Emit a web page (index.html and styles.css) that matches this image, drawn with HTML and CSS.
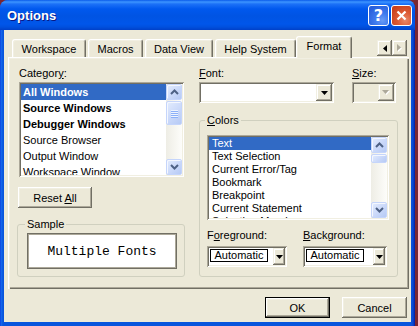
FILE: index.html
```html
<!DOCTYPE html>
<html lang="en">
<head>
    <meta charset="UTF-8">
    <meta name="viewport" content="width=device-width, initial-scale=1.0">
    <title>Options</title>
    <link rel="stylesheet" href="styles.css">
</head>
<body>
    <div class="window">
        <div class="titlebar">
            <span class="title">Options</span>
            <span class="cap-btn help">?</span>
            <span class="cap-btn close">
                <svg width="11" height="11" viewBox="0 0 11 11"><path d="M1.5 1.5 L9.5 9.5 M9.5 1.5 L1.5 9.5" stroke="#fff" stroke-width="2.2" fill="none"/></svg>
            </span>
        </div>

        <div class="client">
            <div class="tabstrip">
                <span class="tab tab-ws">Workspace</span>
                <span class="tab tab-mc">Macros</span>
                <span class="tab tab-dv">Data View</span>
                <span class="tab tab-hs">Help System</span>
                <span class="tab tab-fm active">Format</span>
                <span class="tab-arrows">
                    <span class="btn3d tab-arrow">
                        <svg width="4" height="7" viewBox="0 0 4 7"><polygon points="4,0 4,7 0,3.5" fill="#000"/></svg>
                    </span>
                    <span class="btn3d tab-arrow">
                        <svg width="5" height="8" viewBox="0 0 5 8"><polygon points="1,1 5,4.5 1,8" fill="#fff"/><polygon points="0,0 4,3.5 0,7" fill="#ACA899"/></svg>
                    </span>
                </span>
            </div>

            <div class="page">
                <div class="col-left">
                    <div class="label">Categor<u>y</u>:</div>
                    <div class="listbox cat-list">
                        <div class="items">
                            <div class="item bold selected">All Windows</div>
                            <div class="item bold">Source Windows</div>
                            <div class="item bold">Debugger Windows</div>
                            <div class="item">Source Browser</div>
                            <div class="item">Output Window</div>
                            <div class="item">Workspace Window</div>
                        </div>
                        <div class="vscroll">
                            <span class="sb-btn"><svg width="9" height="6" viewBox="0 0 9 6"><polyline points="1,5 4.5,1.5 8,5" stroke="#4D6185" stroke-width="2" fill="none"/></svg></span>
                            <span class="sb-thumb cat-thumb"><i></i><i></i><i></i><i></i></span>
                            <span class="sb-track"></span>
                            <span class="sb-btn"><svg width="9" height="6" viewBox="0 0 9 6"><polyline points="1,1 4.5,4.5 8,1" stroke="#4D6185" stroke-width="2" fill="none"/></svg></span>
                        </div>
                    </div>
                    <button class="btn reset">Reset <u>A</u>ll</button>
                    <fieldset class="group sample">
                        <legend>Sample</legend>
                        <div class="sample-box">Multiple Fonts</div>
                    </fieldset>
                </div>

                <div class="col-right">
                    <div class="font-row">
                        <div class="font-field">
                            <div class="label"><u>F</u>ont:</div>
                            <div class="combo">
                                <span class="btn3d drop">
                                    <svg width="7" height="4" viewBox="0 0 7 4"><polygon points="0,0 7,0 3.5,4" fill="#000"/></svg>
                                </span>
                            </div>
                        </div>
                        <div class="size-field">
                            <div class="label"><u>S</u>ize:</div>
                            <div class="combo disabled">
                                <span class="btn3d drop">
                                    <svg width="8" height="5" viewBox="0 0 8 5"><polygon points="1,1 8,1 4.5,5" fill="#fff"/><polygon points="0,0 7,0 3.5,4" fill="#ACA899"/></svg>
                                </span>
                            </div>
                        </div>
                    </div>

                    <fieldset class="group colors">
                        <legend><u>C</u>olors</legend>
                        <div class="listbox color-list">
                            <div class="items">
                                <div class="item selected">Text</div>
                                <div class="item">Text Selection</div>
                                <div class="item">Current Error/Tag</div>
                                <div class="item">Bookmark</div>
                                <div class="item">Breakpoint</div>
                                <div class="item">Current Statement</div>
                                <div class="item">Selection Margin</div>
                            </div>
                            <div class="vscroll">
                                <span class="sb-btn"><svg width="9" height="6" viewBox="0 0 9 6"><polyline points="1,5 4.5,1.5 8,5" stroke="#4D6185" stroke-width="2" fill="none"/></svg></span>
                                <span class="sb-thumb color-thumb"></span>
                                <span class="sb-track"></span>
                                <span class="sb-btn"><svg width="9" height="6" viewBox="0 0 9 6"><polyline points="1,1 4.5,4.5 8,1" stroke="#4D6185" stroke-width="2" fill="none"/></svg></span>
                            </div>
                        </div>
                        <div class="pickers">
                            <div class="picker fg">
                                <div class="label">F<u>o</u>reground:</div>
                                <div class="combo color-combo">
                                    <span class="swatch">Automatic</span>
                                    <span class="btn3d drop">
                                        <svg width="7" height="4" viewBox="0 0 7 4"><polygon points="0,0 7,0 3.5,4" fill="#000"/></svg>
                                    </span>
                                </div>
                            </div>
                            <div class="picker bg">
                                <div class="label"><u>B</u>ackground:</div>
                                <div class="combo color-combo">
                                    <span class="swatch">Automatic</span>
                                    <span class="btn3d drop">
                                        <svg width="7" height="4" viewBox="0 0 7 4"><polygon points="0,0 7,0 3.5,4" fill="#000"/></svg>
                                    </span>
                                </div>
                            </div>
                        </div>
                    </fieldset>
                </div>
            </div>

            <div class="actions">
                <button class="btn default">OK</button>
                <button class="btn">Cancel</button>
            </div>
        </div>
    </div>
</body>
</html>
```

FILE: styles.css
```css
* {
    box-sizing: border-box;
}

html, body {
    width: 418px;
    height: 326px;
    overflow: hidden;
}

body {
    margin: 0;
    background-color: #7a2632;
    font-family: 'Liberation Sans', Arial, sans-serif;
    font-size: 11px;
    color: #000;
}

.window {
    width: 415px;
    height: 326px;
    display: flex;
    flex-direction: column;
    background: linear-gradient(to right, #0831D9 0, #166AEE 1px, #0855DD 3px, #0855DD 411px, #0A47D2 413px, #001EA0 415px);
    border-radius: 8px 8px 0 0;
}

/* title bar */
.titlebar {
    height: 30px;
    display: flex;
    align-items: center;
    padding: 0 3px 0 7px;
    border-radius: 8px 8px 0 0;
    background: linear-gradient(to bottom, #0A5BEA 0, #3D95FF 2px, #1C71F7 4px, #0058EE 9px, #0054E3 16px, #0056EA 24px, #0050DE 27px, #0040C8 30px);
}

.title {
    flex: 1;
    color: #fff;
    font-weight: bold;
    font-size: 13px;
    text-shadow: 1px 1px #0A1883;
}

.cap-btn {
    width: 21px;
    height: 21px;
    margin-left: 2px;
    border: 1px solid #fff;
    border-radius: 3px;
    display: flex;
    align-items: center;
    justify-content: center;
}

.help {
    background: radial-gradient(circle at 70% 75%, #6A9CF5 0, #3F7BEF 35%, #2860DC 80%);
    color: #fff;
    font-weight: bold;
    font-size: 16px;
    font-family: 'DejaVu Sans', sans-serif;
}

.close {
    background: radial-gradient(circle at 70% 75%, #E9896A 0, #DD5A34 40%, #C8401C 85%);
}

/* client area */
.client {
    flex: 1;
    margin: 0 4px 4px 4px;
    padding: 0 2px 0 4px;
    background-color: #ECE9D8;
}

.tabstrip {
    height: 27px;
    display: flex;
    align-items: flex-end;
    padding: 0 2px 0 4px;
}

.tab {
    height: 18px;
    margin-right: 2px;
    display: flex;
    align-items: center;
    justify-content: center;
    border-top: 1px solid #fff;
    border-left: 1px solid #fff;
    border-right: 1px solid #716F64;
    border-radius: 3px 3px 0 0;
    box-shadow: inset 1px 1px #F1EFE2, inset -1px 0 #ACA899;
    background-color: #ECE9D8;
}

.tab-ws { width: 74px; }
.tab-mc { width: 55px; }
.tab-dv { width: 68px; }
.tab-hs { width: 81px; }
.tab-fm { width: 56px; }

.tab.active {
    position: relative;
    z-index: 1;
    height: 22px;
    margin: 0 -2px -1px -2px;
    padding-bottom: 3px;
}

.tab-arrows {
    display: flex;
    margin-left: auto;
    margin-bottom: 1px;
}

.tab-arrow {
    width: 15px;
    height: 16px;
}

.btn3d {
    display: flex;
    align-items: center;
    justify-content: center;
    background-color: #ECE9D8;
    box-shadow: inset -1px -1px #716F64, inset 1px 1px #F1EFE2, inset -2px -2px #ACA899, inset 2px 2px #fff;
}

/* tab page */
.page {
    height: 232px;
    display: grid;
    grid-template-columns: 168px 199px;
    column-gap: 14px;
    align-items: start;
    padding: 10px 0 0 9px;
    box-shadow: inset 1px 1px #fff, inset 2px 2px #F1EFE2, inset -1px -1px #716F64, inset -2px -2px #ACA899;
}

.col-left, .col-right {
    display: flex;
    flex-direction: column;
}

.label {
    height: 13px;
    line-height: 13px;
    margin-bottom: 2px;
    white-space: nowrap;
}

.col-left > .label {
    margin-left: 2px;
}

.listbox {
    display: flex;
    padding: 2px;
    overflow: hidden;
    background-color: #fff;
    box-shadow: inset 1px 1px #ACA899, inset -1px -1px #fff, inset 2px 2px #716F64, inset -2px -2px #F1EFE2;
}

.items {
    flex: 1;
    overflow: hidden;
}

.item {
    white-space: nowrap;
}

.item.selected {
    background-color: #316AC5;
    color: #fff;
}

.bold {
    font-weight: bold;
}

.cat-list {
    width: 165px;
    height: 95px;
    margin-left: 2px;
}

.cat-list .item {
    height: 16px;
    line-height: 16px;
    padding-left: 2px;
}

/* xp scrollbar */
.vscroll {
    width: 16px;
    display: flex;
    flex-direction: column;
    background: linear-gradient(to right, #EEEDE5, #FDFDFA);
}

.sb-btn, .sb-thumb {
    display: flex;
    flex-direction: column;
    align-items: center;
    justify-content: center;
    border: 1px solid #C5D5FB;
    border-radius: 2px;
    background: linear-gradient(135deg, #E3ECFD 0, #CCDAFA 50%, #B6CAF5 100%);
    box-shadow: inset 1px 1px #F4F7FE;
}

.sb-btn {
    height: 16px;
}

.sb-thumb {
    gap: 1px;
}

.sb-thumb i {
    display: block;
    width: 7px;
    height: 1px;
    background-color: #EEF4FE;
    box-shadow: 0 1px #8CB0F8;
}

.cat-thumb {
    height: 24px;
    margin-top: 1px;
}

.color-thumb {
    height: 9px;
    margin-top: 1px;
}

.sb-track {
    flex: 1;
}

.btn {
    width: 65px;
    height: 21px;
    padding: 0;
    border: none;
    font: inherit;
    color: #000;
    background-color: #ECE9D8;
    box-shadow: inset -1px -1px #716F64, inset 1px 1px #fff, inset -2px -2px #ACA899, inset 2px 2px #F1EFE2;
}

.btn.default {
    border: 1px solid #000;
}

.reset {
    width: 74px;
    margin: 10px 0 0 1px;
}

/* group boxes */
.group {
    margin: 0;
    border: 1px solid #D0D0BF;
    border-radius: 3px;
}

.group legend {
    padding: 0 2px;
    margin-left: -2px;
    line-height: 12px;
}

.sample {
    width: 168px;
    margin-top: 10px;
    padding: 3px 0 7px 9px;
}

.sample-box {
    width: 150px;
    height: 36px;
    display: flex;
    align-items: center;
    justify-content: center;
    font-family: 'Liberation Mono', 'Courier New', monospace;
    font-size: 13px;
    background-color: #fff;
    box-shadow: inset 1px 1px #716F64, inset -1px -1px #716F64, inset 2px 2px #ACA899, inset -2px -2px #ACA899;
}

/* right column */
.font-row {
    display: flex;
    gap: 18px;
}

.font-field {
    width: 135px;
}

.size-field {
    width: 44px;
}

.combo {
    height: 21px;
    display: flex;
    justify-content: flex-end;
    padding: 2px;
    background-color: #fff;
    box-shadow: inset 1px 1px #ACA899, inset -1px -1px #fff, inset 2px 2px #716F64, inset -2px -2px #F1EFE2;
}

.combo.disabled {
    background-color: #ECE9D8;
}

.drop {
    width: 16px;
}

.colors {
    width: 199px;
    margin-top: 11px;
    padding: 9px 0 9px 7px;
}

.color-list {
    width: 182px;
    height: 85px;
}

.color-list .item {
    height: 13px;
    line-height: 13px;
    padding-left: 3px;
}

.pickers {
    display: flex;
    gap: 16px;
    margin-top: 9px;
}

.picker .label {
    height: 12px;
    line-height: 12px;
    margin-bottom: 5px;
}

.fg .color-combo {
    width: 80px;
}

.bg .color-combo {
    width: 84px;
}

.color-combo {
    justify-content: space-between;
}

.swatch {
    width: 58px;
    height: 13px;
    margin: 1px 0 0 1px;
    border: 1px solid #000;
    line-height: 11px;
    text-align: center;
}

.color-combo .drop {
    width: 12px;
}

/* dialog buttons */
.actions {
    display: flex;
    justify-content: flex-end;
    gap: 12px;
    margin-top: 8px;
    padding-right: 2px;
}
```
